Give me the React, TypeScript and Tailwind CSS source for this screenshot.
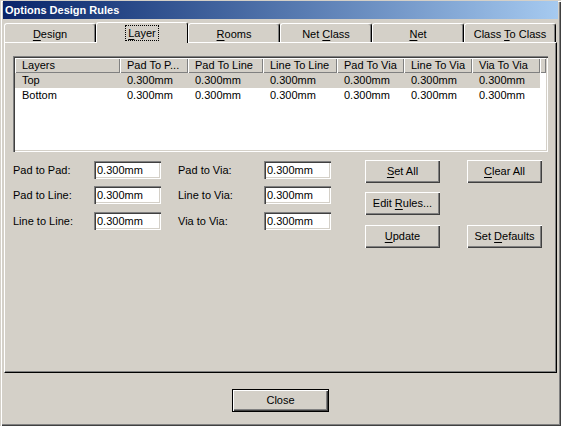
import type { ReactNode } from "react";

const raised =
  "shadow-[inset_1px_1px_0_#ffffff,inset_-1px_-1px_0_#404040,inset_-2px_-2px_0_#808080]";
const sunken =
  "shadow-[inset_1px_1px_0_#808080,inset_2px_2px_0_#404040,inset_-1px_-1px_0_#ffffff,inset_-2px_-2px_0_#d4d0c8]";

function Key({ children }: { children: ReactNode }) {
  return <span className="underline decoration-1 underline-offset-[2px]">{children}</span>;
}

const TABS: { pre: string; key: string; post: string; active?: boolean }[] = [
  { pre: "", key: "D", post: "esign" },
  { pre: "", key: "L", post: "ayer", active: true },
  { pre: "", key: "R", post: "ooms" },
  { pre: "Net ", key: "C", post: "lass" },
  { pre: "", key: "N", post: "et" },
  { pre: "Class ", key: "T", post: "o Class" },
];

const COLS = [
  { title: "Layers", w: "w-[105px]" },
  { title: "Pad To P...", w: "w-[68px]" },
  { title: "Pad To Line", w: "w-[75px]" },
  { title: "Line To Line", w: "w-[74px]" },
  { title: "Pad To Via", w: "w-[67px]" },
  { title: "Line To Via", w: "w-[68px]" },
  { title: "Via To Via", w: "w-[68px]" },
];

const ROWS = [
  { name: "Top", selected: true },
  { name: "Bottom", selected: false },
];

const FIELDS = [
  { a: "Pad to Pad:", b: "Pad to Via:", mt: "mt-[1px]" },
  { a: "Pad to Line:", b: "Line to Via:", mt: "mt-[7px]" },
  { a: "Line to Line:", b: "Via to Via:", mt: "mt-[8px]" },
];

function Tab({ pre, k, post, active }: { pre: string; k: string; post: string; active?: boolean }) {
  if (active) {
    return (
      <div className="relative z-10 -mb-px h-[21px] w-[92px] rounded-t-[3px] border-l border-t border-r border-l-white border-t-white border-r-black bg-[#d4d0c8] flex justify-center pt-[2px]">
        <span className="h-[16px] border border-dotted border-black px-[2px] flex items-center">
          {pre}
          <Key>{k}</Key>
          {post}
        </span>
      </div>
    );
  }
  return (
    <div className="h-[19px] w-[92px] rounded-t-[3px] border-l border-t border-r border-l-white border-t-white border-r-black bg-[#d4d0c8] shadow-[inset_-1px_0_0_#808080] flex justify-center items-center pt-[3px]">
      <span>
        {pre}
        <Key>{k}</Key>
        {post}
      </span>
    </div>
  );
}

function Btn({ children, cls = "" }: { children: ReactNode; cls?: string }) {
  return (
    <button className={`h-[23px] w-[75px] bg-[#d4d0c8] flex items-center justify-center ${raised} ${cls}`}>
      <span>{children}</span>
    </button>
  );
}

function Input() {
  return (
    <div className={`h-[18px] w-[67px] bg-white pl-[3px] flex items-center ${sunken}`}>0.300mm</div>
  );
}

export default function App() {
  return (
    <div className="w-[561px] h-[426px] bg-[#d4d0c8] pt-[1px] px-[3px] shadow-[inset_1px_1px_0_#d4d0c8,inset_2px_2px_0_#ffffff,inset_-1px_-1px_0_#404040,inset_-2px_-2px_0_#808080] font-['Liberation_Sans',Arial,sans-serif] text-[11px] leading-none text-black select-none">
      <div className="h-[18px] bg-linear-to-r from-[#0a246a] to-[#a6caf0] pl-[2px] flex items-center text-white font-bold text-[11px]">
        Options Design Rules
      </div>

      <div className="mx-px">
        <div className="mt-[3px] h-[20px] flex items-end">
          {TABS.map((t) => (
            <Tab key={t.key} pre={t.pre} k={t.key} post={t.post} active={t.active} />
          ))}
        </div>

        <div className="h-[331px] border border-l-white border-t-white border-r-black border-b-black shadow-[inset_-1px_-1px_0_#808080] pl-[8px] pt-[13px]">
          {/* layer list */}
          <div className={`w-[535px] h-[96px] bg-white p-[2px] ${sunken}`}>
            <div className="flex h-[15px] bg-[#d4d0c8]">
              {COLS.map((c) => (
                <div
                  key={c.title}
                  className={`${c.w} h-full pl-[7px] flex items-center shadow-[inset_1px_1px_0_#ffffff,inset_-1px_-1px_0_#808080]`}
                >
                  {c.title}
                </div>
              ))}
              <div className="flex-1 h-full shadow-[inset_1px_1px_0_#ffffff,inset_-1px_-1px_0_#808080]" />
            </div>
            {ROWS.map((r) => (
              <div key={r.name} className={`flex h-[15px] w-[525px] ${r.selected ? "bg-[#d4d0c8]" : ""}`}>
                {COLS.map((c, i) => (
                  <div key={c.title} className={`${c.w} h-full pl-[7px] flex items-center`}>
                    {i === 0 ? r.name : "0.300mm"}
                  </div>
                ))}
              </div>
            ))}
          </div>

          {/* rule fields and buttons */}
          <div className="mt-[8px] flex">
            <div className="flex flex-col">
              {FIELDS.map((f) => (
                <div key={f.a} className={`flex items-center h-[18px] ${f.mt}`}>
                  <div className="w-[81px]">{f.a}</div>
                  <Input />
                  <div className="w-[86px] ml-[17px]">{f.b}</div>
                  <Input />
                </div>
              ))}
            </div>

            <div className="ml-[34px] grid grid-cols-[75px_75px] gap-x-[27px]">
              <Btn>
                <Key>S</Key>et All
              </Btn>
              <Btn>
                <Key>C</Key>lear All
              </Btn>
              <Btn cls="mt-[9px]">
                Edit <Key>R</Key>ules...
              </Btn>
              <div />
              <Btn cls="mt-[10px]">
                <Key>U</Key>pdate
              </Btn>
              <Btn cls="mt-[10px]">
                Set <Key>D</Key>efaults
              </Btn>
            </div>
          </div>
        </div>
      </div>

      <div className="mt-[16px] flex justify-center">
        <button className={`h-[23px] w-[97px] border border-black bg-[#d4d0c8] flex items-center justify-center ${raised}`}>
          Close
        </button>
      </div>
    </div>
  );
}
